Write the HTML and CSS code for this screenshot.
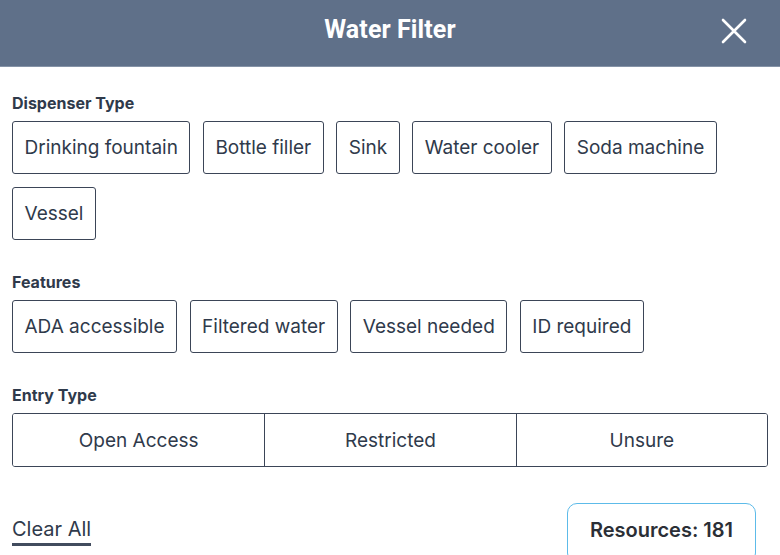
FILE: index.html
```html
<!DOCTYPE html>
<html>
<head>
<meta charset="utf-8">
<link rel="stylesheet" href="styles.css">
</head>
<body>
<div class="modal">
  <header class="header">
    <h1 class="title">Water Filter</h1>
    <button class="close" aria-label="Close">
      <svg width="26" height="26" viewBox="0 0 26 26"><path d="M2 2 L24 24 M24 2 L2 24" stroke="#fff" stroke-width="2.6" stroke-linecap="round"/></svg>
    </button>
  </header>
  <main class="content">
    <section class="group">
      <h2 class="label">Dispenser Type</h2>
      <div class="chips">
        <button class="chip">Drinking fountain</button>
        <button class="chip">Bottle filler</button>
        <button class="chip">Sink</button>
        <button class="chip">Water cooler</button>
        <button class="chip">Soda machine</button>
        <button class="chip">Vessel</button>
      </div>
    </section>
    <section class="group">
      <h2 class="label">Features</h2>
      <div class="chips">
        <button class="chip">ADA accessible</button>
        <button class="chip">Filtered water</button>
        <button class="chip">Vessel needed</button>
        <button class="chip">ID required</button>
      </div>
    </section>
    <section class="group">
      <h2 class="label">Entry Type</h2>
      <div class="segments">
        <button class="segment">Open Access</button>
        <button class="segment">Restricted</button>
        <button class="segment">Unsure</button>
      </div>
    </section>
    <footer class="footer">
      <a class="clear">Clear All</a>
      <div class="resources">Resources: 181</div>
    </footer>
  </main>
</div>
</body>
</html>
```
FILE: styles.css
```css
* { box-sizing: border-box; }
html, body { margin: 0; padding: 0; background: #fff; }
body { font-family: Inter, "Noto Sans", sans-serif; color: #2f3a4b; overflow: hidden; height: 555px; }
.header {
  height: 67px;
  background: #5f7089;
  border-bottom: 1px solid #8593a7;
  display: flex;
  align-items: center;
  justify-content: center;
  position: relative;
}
.title {
  margin: 0 0 8px 0;
  font-family: Roboto, sans-serif;
  font-weight: 700;
  font-size: 25px;
  color: #fff;
  letter-spacing: 0.1px;
}
.close {
  position: absolute;
  right: 33px;
  top: 18px;
  background: none;
  border: 0;
  padding: 0;
  width: 26px;
  height: 26px;
  display: flex;
}
.content { padding: 26px 12px 0 12px; }
.group { margin: 0; }
.label {
  margin: 0 0 8px 0;
  font-size: 16px;
  font-weight: 700;
  line-height: 20px;
  color: #2f3a4b;
}
.chips { display: flex; flex-wrap: wrap; gap: 13px 12.5px; margin-bottom: 32px; }
.chip {
  height: 53px;
  padding: 0 11.5px;
  border: 1px solid #3b4557;
  border-radius: 3px;
  background: #fff;
  font-family: Inter, sans-serif;
  font-size: 19px;
  color: #2f3a4b;
}
.segments {
  display: grid;
  grid-template-columns: 1fr 1fr 1fr;
  height: 54px;
  border: 1px solid #3b4557;
  border-radius: 3px;
  overflow: hidden;
  width: 756px;
}
.segment {
  border: 0;
  background: #fff;
  font-family: Inter, sans-serif;
  font-size: 19px;
  color: #2f3a4b;
}
.segment + .segment { border-left: 1px solid #3b4557; }
.footer {
  display: flex;
  justify-content: space-between;
  align-items: flex-start;
  margin-top: 36px;
  padding-right: 12px;
}
.clear {
  margin-top: 14px;
  font-size: 20px;
  line-height: 24px;
  color: #2f3a4b;
  border-bottom: 3px solid #414c5e;
  padding-bottom: 2px;
}
.resources {
  width: 189px;
  height: 60px;
  border: 1px solid #5dbbe9;
  border-radius: 10px;
  display: flex;
  align-items: flex-start;
  justify-content: center;
  padding-top: 14px;
  font-size: 20px;
  font-weight: 600;
  color: #2b2f36;
}
```
